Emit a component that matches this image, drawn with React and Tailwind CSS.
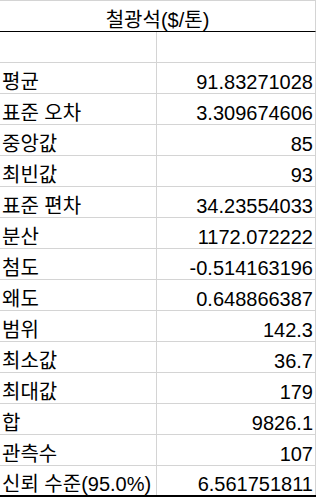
import React from 'react';

const rows = [
  ['', ''],
  ['평균', '91.83271028'],
  ['표준 오차', '3.309674606'],
  ['중앙값', '85'],
  ['최빈값', '93'],
  ['표준 편차', '34.23554033'],
  ['분산', '1172.072222'],
  ['첨도', '-0.514163196'],
  ['왜도', '0.648866387'],
  ['범위', '142.3'],
  ['최소값', '36.7'],
  ['최대값', '179'],
  ['합', '9826.1'],
  ['관측수', '107'],
  ['신뢰 수준(95.0%)', '6.561751811'],
];

const App = () => {
  return (
    <div
      className="w-[316px] h-[497px] bg-white text-black text-[20px] leading-[20px] border-t border-[#d4d4d4] overflow-hidden"
      style={{ fontFamily: '"Liberation Sans", "Noto Sans CJK KR", sans-serif' }}
    >
      <div className="h-[31px] flex items-end justify-center pb-[1px] border-b border-black border-r border-r-[#d4d4d4]">
        <span className="whitespace-nowrap">철광석($/톤)</span>
      </div>

      {rows.map(([label, value], i) => {
        const last = i === rows.length - 1;
        return (
          <div
            key={i}
            className={`grid grid-cols-[157px_1fr] h-[31px] ${last ? 'border-b-2 border-black' : 'border-b border-[#d4d4d4]'}`}
          >
            <div className="flex items-end pl-[2px] pb-[1px] border-r border-[#d4d4d4] whitespace-nowrap overflow-visible">
              {label}
            </div>
            <div className="flex items-end justify-end pr-[2px] pb-[1px] border-r border-[#d4d4d4] whitespace-nowrap">
              {value}
            </div>
          </div>
        );
      })}
    </div>
  );
};

export default App;
